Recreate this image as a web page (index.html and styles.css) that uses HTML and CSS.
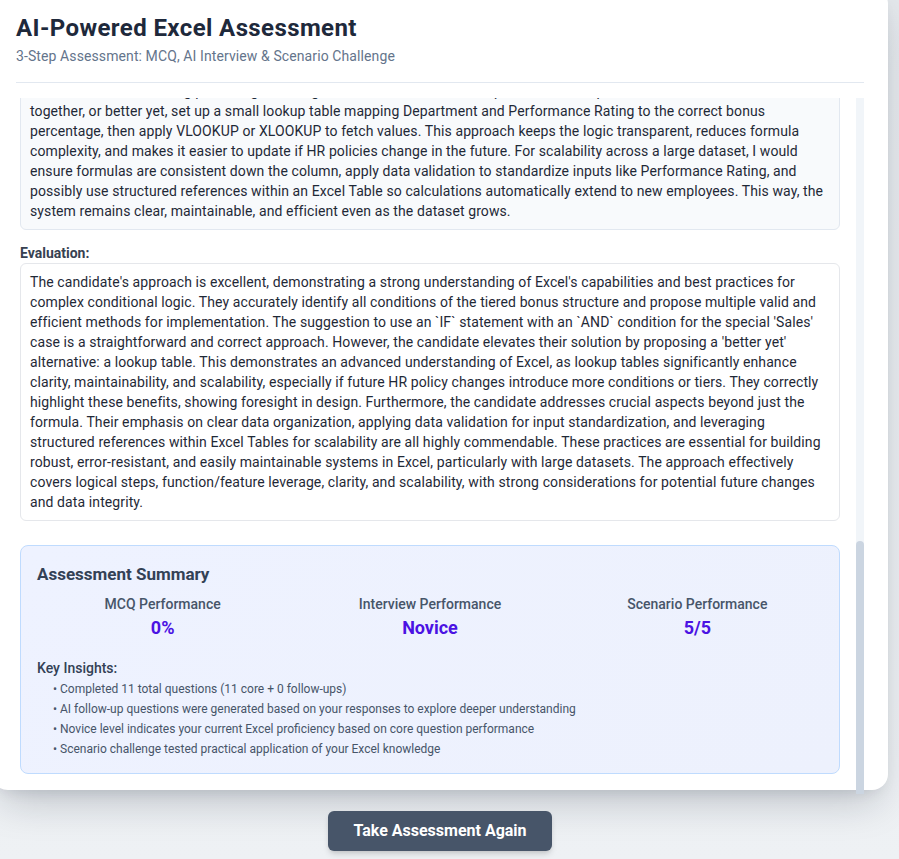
FILE: index.html
```html
<!DOCTYPE html>
<html lang="en">
<head>
<meta charset="utf-8">
<title>AI-Powered Excel Assessment</title>
<link rel="stylesheet" href="styles.css">
</head>
<body>
<div class="page">
  <div class="card">
    <header class="card-header">
      <h1 class="title">AI-Powered Excel Assessment</h1>
      <p class="subtitle">3-Step Assessment: MCQ, AI Interview &amp; Scenario Challenge</p>
    </header>
    <div class="scroll-frame">
      <div class="scroll">
        <div class="scroll-inner">
          <section class="block">
            <div class="box box-gray">I would avoid hard-coding percentages in long nested IF formulas and keep the Sales exception and the standard rates<br>together, or better yet, set up a small lookup table mapping Department and Performance Rating to the correct bonus<br>percentage, then apply VLOOKUP or XLOOKUP to fetch values. This approach keeps the logic transparent, reduces formula<br>complexity, and makes it easier to update if HR policies change in the future. For scalability across a large dataset, I would<br>ensure formulas are consistent down the column, apply data validation to standardize inputs like Performance Rating, and<br>possibly use structured references within an Excel Table so calculations automatically extend to new employees. This way, the<br>system remains clear, maintainable, and efficient even as the dataset grows.</div>
            <p class="label">Evaluation:</p>
            <div class="box box-white">The candidate's approach is excellent, demonstrating a strong understanding of Excel's capabilities and best practices for<br>complex conditional logic. They accurately identify all conditions of the tiered bonus structure and propose multiple valid and<br>efficient methods for implementation. The suggestion to use an `IF` statement with an `AND` condition for the special 'Sales'<br>case is a straightforward and correct approach. However, the candidate elevates their solution by proposing a 'better yet'<br>alternative: a lookup table. This demonstrates an advanced understanding of Excel, as lookup tables significantly enhance<br>clarity, maintainability, and scalability, especially if future HR policy changes introduce more conditions or tiers. They correctly<br>highlight these benefits, showing foresight in design. Furthermore, the candidate addresses crucial aspects beyond just the<br>formula. Their emphasis on clear data organization, applying data validation for input standardization, and leveraging<br>structured references within Excel Tables for scalability are all highly commendable. These practices are essential for building<br>robust, error-resistant, and easily maintainable systems in Excel, particularly with large datasets. The approach effectively<br>covers logical steps, function/feature leverage, clarity, and scalability, with strong considerations for potential future changes<br>and data integrity.</div>
          </section>

          <section class="summary">
            <h2 class="summary-title">Assessment Summary</h2>
            <div class="stats">
              <div class="stat">
                <div class="stat-label">MCQ Performance</div>
                <div class="stat-value">0%</div>
              </div>
              <div class="stat">
                <div class="stat-label">Interview Performance</div>
                <div class="stat-value">Novice</div>
              </div>
              <div class="stat">
                <div class="stat-label">Scenario Performance</div>
                <div class="stat-value">5/5</div>
              </div>
            </div>
            <h3 class="insights-title">Key Insights:</h3>
            <ul class="insights">
              <li>• Completed 11 total questions (11 core + 0 follow-ups)</li>
              <li>• AI follow-up questions were generated based on your responses to explore deeper understanding</li>
              <li>• Novice level indicates your current Excel proficiency based on core question performance</li>
              <li>• Scenario challenge tested practical application of your Excel knowledge</li>
            </ul>
          </section>
        </div>
      </div>
      <div class="scrollbar" aria-hidden="true"><div class="scrollbar-thumb"></div></div>
    </div>
  </div>
  <div class="actions">
    <button class="btn" type="button">Take Assessment Again</button>
  </div>
</div>
</body>
</html>
```

FILE: styles.css
```css
* { box-sizing: border-box; }
html, body { margin: 0; padding: 0; }
body {
  font-family: "Roboto", "Noto Sans", sans-serif;
  background: linear-gradient(180deg, #e3e7eb 0%, #eef1f4 100%);
  height: 859px;
  overflow: hidden;
  color: #1f2937;
}
.page {
  width: 896px;
  margin-left: -8px;
}
.card {
  background: #fff;
  margin-top: -12px;
  height: 802px;
  padding: 24px 24px 0 24px;
  border-radius: 16px;
  box-shadow: 0 20px 40px -10px rgba(15, 23, 42, 0.22), 0 8px 16px -8px rgba(15, 23, 42, 0.12);
}
.card-header {
  padding-bottom: 16px;
  border-bottom: 1px solid #e2e8f0;
  margin-bottom: 15px;
}
.title {
  margin: 0;
  font-size: 24px;
  line-height: 32px;
  font-weight: 700;
  letter-spacing: 0.4px;
  color: #1e293b;
}
.subtitle {
  margin: 2px 0 0;
  font-size: 14px;
  line-height: 20px;
  letter-spacing: 0.1px;
  color: #64748b;
}
.scroll-frame {
  display: flex;
  height: 696px;
}
.scroll {
  flex: 1;
  min-width: 0;
  overflow: hidden;
  display: flex;
  flex-direction: column-reverse;
}
.scrollbar {
  width: 8px;
  flex: none;
  background: #f1f5f9;
  display: flex;
  flex-direction: column;
  justify-content: flex-end;
}
.scrollbar-thumb {
  height: 253px;
  background: #cbd5e1;
  border-radius: 4px 4px 0 0;
}
.scroll-inner {
  padding: 0 16px 20px 4px;
}
.label {
  margin: 13px 0 0;
  font-size: 14px;
  line-height: 20px;
  font-weight: 700;
  color: #374151;
}
.box {
  font-size: 14px;
  line-height: 20px;
  letter-spacing: 0.1px;
  padding: 8px 9px;
  border-radius: 6px;
  color: #1f2937;
}
.box-gray { background: #f8fafc; border: 1px solid #e2e8f0; }
.box-white { background: #fff; border: 1px solid #e5e7eb; }
.summary {
  margin-top: 24px;
  padding: 16px;
  border: 1px solid #bfdbfe;
  border-radius: 8px;
  background: linear-gradient(135deg, #eef2ff 0%, #edf1fd 100%);
}
.summary-title {
  margin: 0 0 8px;
  font-size: 17px;
  line-height: 24px;
  font-weight: 700;
  color: #334155;
}
.stats {
  display: grid;
  grid-template-columns: repeat(3, 1fr);
  gap: 16px;
  text-align: center;
}
.stat-label {
  font-size: 14px;
  line-height: 20px;
  font-weight: 500;
  color: #475569;
}
.stat-value {
  font-size: 18px;
  line-height: 28px;
  font-weight: 700;
  color: #4b12e3;
}
.insights-title {
  margin: 16px 0 3px;
  font-size: 14px;
  line-height: 20px;
  font-weight: 500;
  color: #334155;
}
.insights {
  list-style: none;
  margin: 0;
  padding: 0 0 0 16px;
  display: flex;
  flex-direction: column;
  gap: 4px;
}
.insights li {
  font-size: 12px;
  line-height: 16px;
  color: #475569;
}
.actions {
  display: flex;
  justify-content: center;
  padding-top: 21px;
}
.btn {
  font-family: inherit;
  font-size: 16px;
  line-height: 24px;
  font-weight: 700;
  color: #fff;
  background: #475569;
  border: none;
  border-radius: 6px;
  padding: 8px 25px;
  box-shadow: 0 4px 6px -1px rgba(0,0,0,0.15), 0 2px 4px -2px rgba(0,0,0,0.1);
}
```
